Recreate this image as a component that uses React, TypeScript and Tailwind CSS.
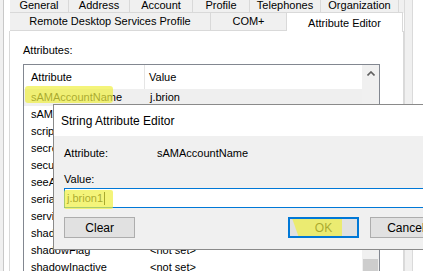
import React from "react";

interface Row {
  name: string;
  value: string;
}

const rows: Row[] = [
  { name: "sAMAccountName", value: "j.brion" },
  { name: "sAMAccountType", value: "805306368" },
  { name: "scriptPath", value: "<not set>" },
  { name: "secretary", value: "<not set>" },
  { name: "securityIdentifier", value: "<not set>" },
  { name: "seeAlso", value: "<not set>" },
  { name: "serialNumber", value: "<not set>" },
  { name: "serviceBindingInformation", value: "<not set>" },
  { name: "shadowExpire", value: "<not set>" },
  { name: "shadowFlag", value: "<not set>" },
  { name: "shadowInactive", value: "<not set>" },
];

const topTabs = [
  { label: "General", w: "w-[59px]" },
  { label: "Address", w: "w-[61px]" },
  { label: "Account", w: "w-[63px]" },
  { label: "Profile", w: "w-[57px]" },
  { label: "Telephones", w: "w-[71px]" },
  { label: "Organization", w: "w-[78px]" },
];

// yellow marker stroke laid over text
const Marker: React.FC<{ className: string }> = ({ className }) => (
  <span className={`absolute bg-[#efef41]/70 pointer-events-none z-[5] ${className}`} />
);

const App: React.FC = () => {
  return (
    <div
      className="relative w-[423px] h-[271px] overflow-hidden bg-white flex text-[11px] text-black"
      style={{ fontFamily: '"Liberation Sans", Arial, sans-serif' }}
    >
      <div className="w-[4px] bg-[#f0f0f0] border-r border-[#c8c8c8]" />

      <div className="w-[400px] flex flex-col pl-[5px]">
        {/* tab rows */}
        <div className="flex ml-[1px] h-[15px] bg-[#f0f0f0]">
          {topTabs.map((t) => (
            <div
              key={t.label}
              className={`${t.w} border-r border-b border-[#d9d9d9] flex items-center justify-center leading-none pb-[1px]`}
            >
              {t.label}
            </div>
          ))}
        </div>
        <div className="flex ml-[1px] h-[18px]">
          <div className="w-[201px] bg-[#f0f0f0] border-r border-b border-[#d9d9d9] flex items-center justify-center">
            Remote Desktop Services Profile
          </div>
          <div className="w-[76px] bg-[#f0f0f0] border-r border-b border-[#d9d9d9] flex items-center justify-center">
            COM+
          </div>
          <div className="w-[116px] bg-white border-r border-t border-[#d9d9d9] -mt-[1px] h-[20px] flex items-start justify-center pt-[2px] z-[2]">
            Attribute Editor
          </div>
        </div>

        {/* page */}
        <div className="flex-1 bg-white border-l border-r border-[#d9d9d9] flex flex-col">
          <div className="pl-[13px] pt-[13px] leading-[13px]">Attributes:</div>
          <div className="ml-[13px] mt-[7px] w-[357px] flex-1 border border-[#828790] flex">
            <div className="flex-1 flex flex-col">
              <div className="h-[24px] flex shrink-0">
                <div className="w-[121px] border-r border-[#e5e5e5] pl-[7px] flex items-center">Attribute</div>
                <div className="pl-[4px] flex items-center">Value</div>
              </div>
              {rows.map((r, i) => (
                <div
                  key={r.name}
                  className={`relative h-[17px] shrink-0 flex items-center ${i === 0 ? "bg-[#efefef]" : ""}`}
                >
                  <div className="w-[122px] pl-[7px] whitespace-nowrap overflow-hidden">{r.name}</div>
                  <div className="pl-[4px] whitespace-nowrap">{r.value}</div>
                  {i === 0 && <Marker className="left-[1px] -top-[3px] w-[88px] h-[17px] rounded-[3px]" />}
                </div>
              ))}
            </div>
            <div className="w-[17px] bg-[#f0f0f0] flex flex-col">
              <div className="h-[17px] flex items-center justify-center shrink-0">
                <svg width="8" height="5" viewBox="0 0 8 5">
                  <polyline points="0.5,4.5 4,1 7.5,4.5" fill="none" stroke="#606060" strokeWidth="1.6" />
                </svg>
              </div>
              <div className="mt-[177px] ml-[1px] w-[15px] h-[40px] bg-[#cdcdcd]" />
            </div>
          </div>
        </div>
      </div>

      <div className="w-[9px] bg-[#f0f0f0] border-l border-[#dadada] border-r border-[#a0a0a0]" />

      {/* String Attribute Editor dialog, on top of the list */}
      <div className="absolute left-[53px] top-[104px] w-[390px] h-[146px] border border-[#8a8a8a] flex flex-col z-10">
        <div className="h-[31px] bg-white flex items-center pl-[7px] text-[12px]">String Attribute Editor</div>
        <div className="flex-1 bg-[#f0f0f0] pl-[10px] flex flex-col">
          <div className="flex pt-[10px] leading-[14px]">
            <div className="w-[93px]">Attribute:</div>
            <div>sAMAccountName</div>
          </div>
          <div className="mt-[12px] leading-[14px]">Value:</div>
          <div className="relative mt-[2px] h-[20px] w-[400px] bg-white border border-[#0078d7] flex items-center pl-[2px]">
            <span>j.brion1</span>
            <span className="w-px h-[13px] bg-black ml-[1px]" />
            <Marker className="-left-[1px] top-[1px] w-[49px] h-[19px] rounded-[2px]" />
          </div>
          <div className="flex mt-[9px]">
            <button className="w-[74px] h-[21px] bg-[#e1e1e1] border border-[#adadad] text-[12px] leading-none">
              Clear
            </button>
            <button className="relative ml-[153px] w-[73px] h-[21px] bg-[#e1e1e1] border-2 border-[#0078d7] text-[12px] leading-none">
              OK
              <Marker className="left-[2px] top-0 w-[50px] h-[17px] [clip-path:polygon(0_0,100%_0,100%_100%,12%_100%)]" />
            </button>
            <button className="ml-[11px] w-[75px] h-[21px] bg-[#e1e1e1] border border-[#adadad] text-[12px] leading-none">
              Cancel
            </button>
          </div>
        </div>
      </div>
    </div>
  );
};

export default App;
